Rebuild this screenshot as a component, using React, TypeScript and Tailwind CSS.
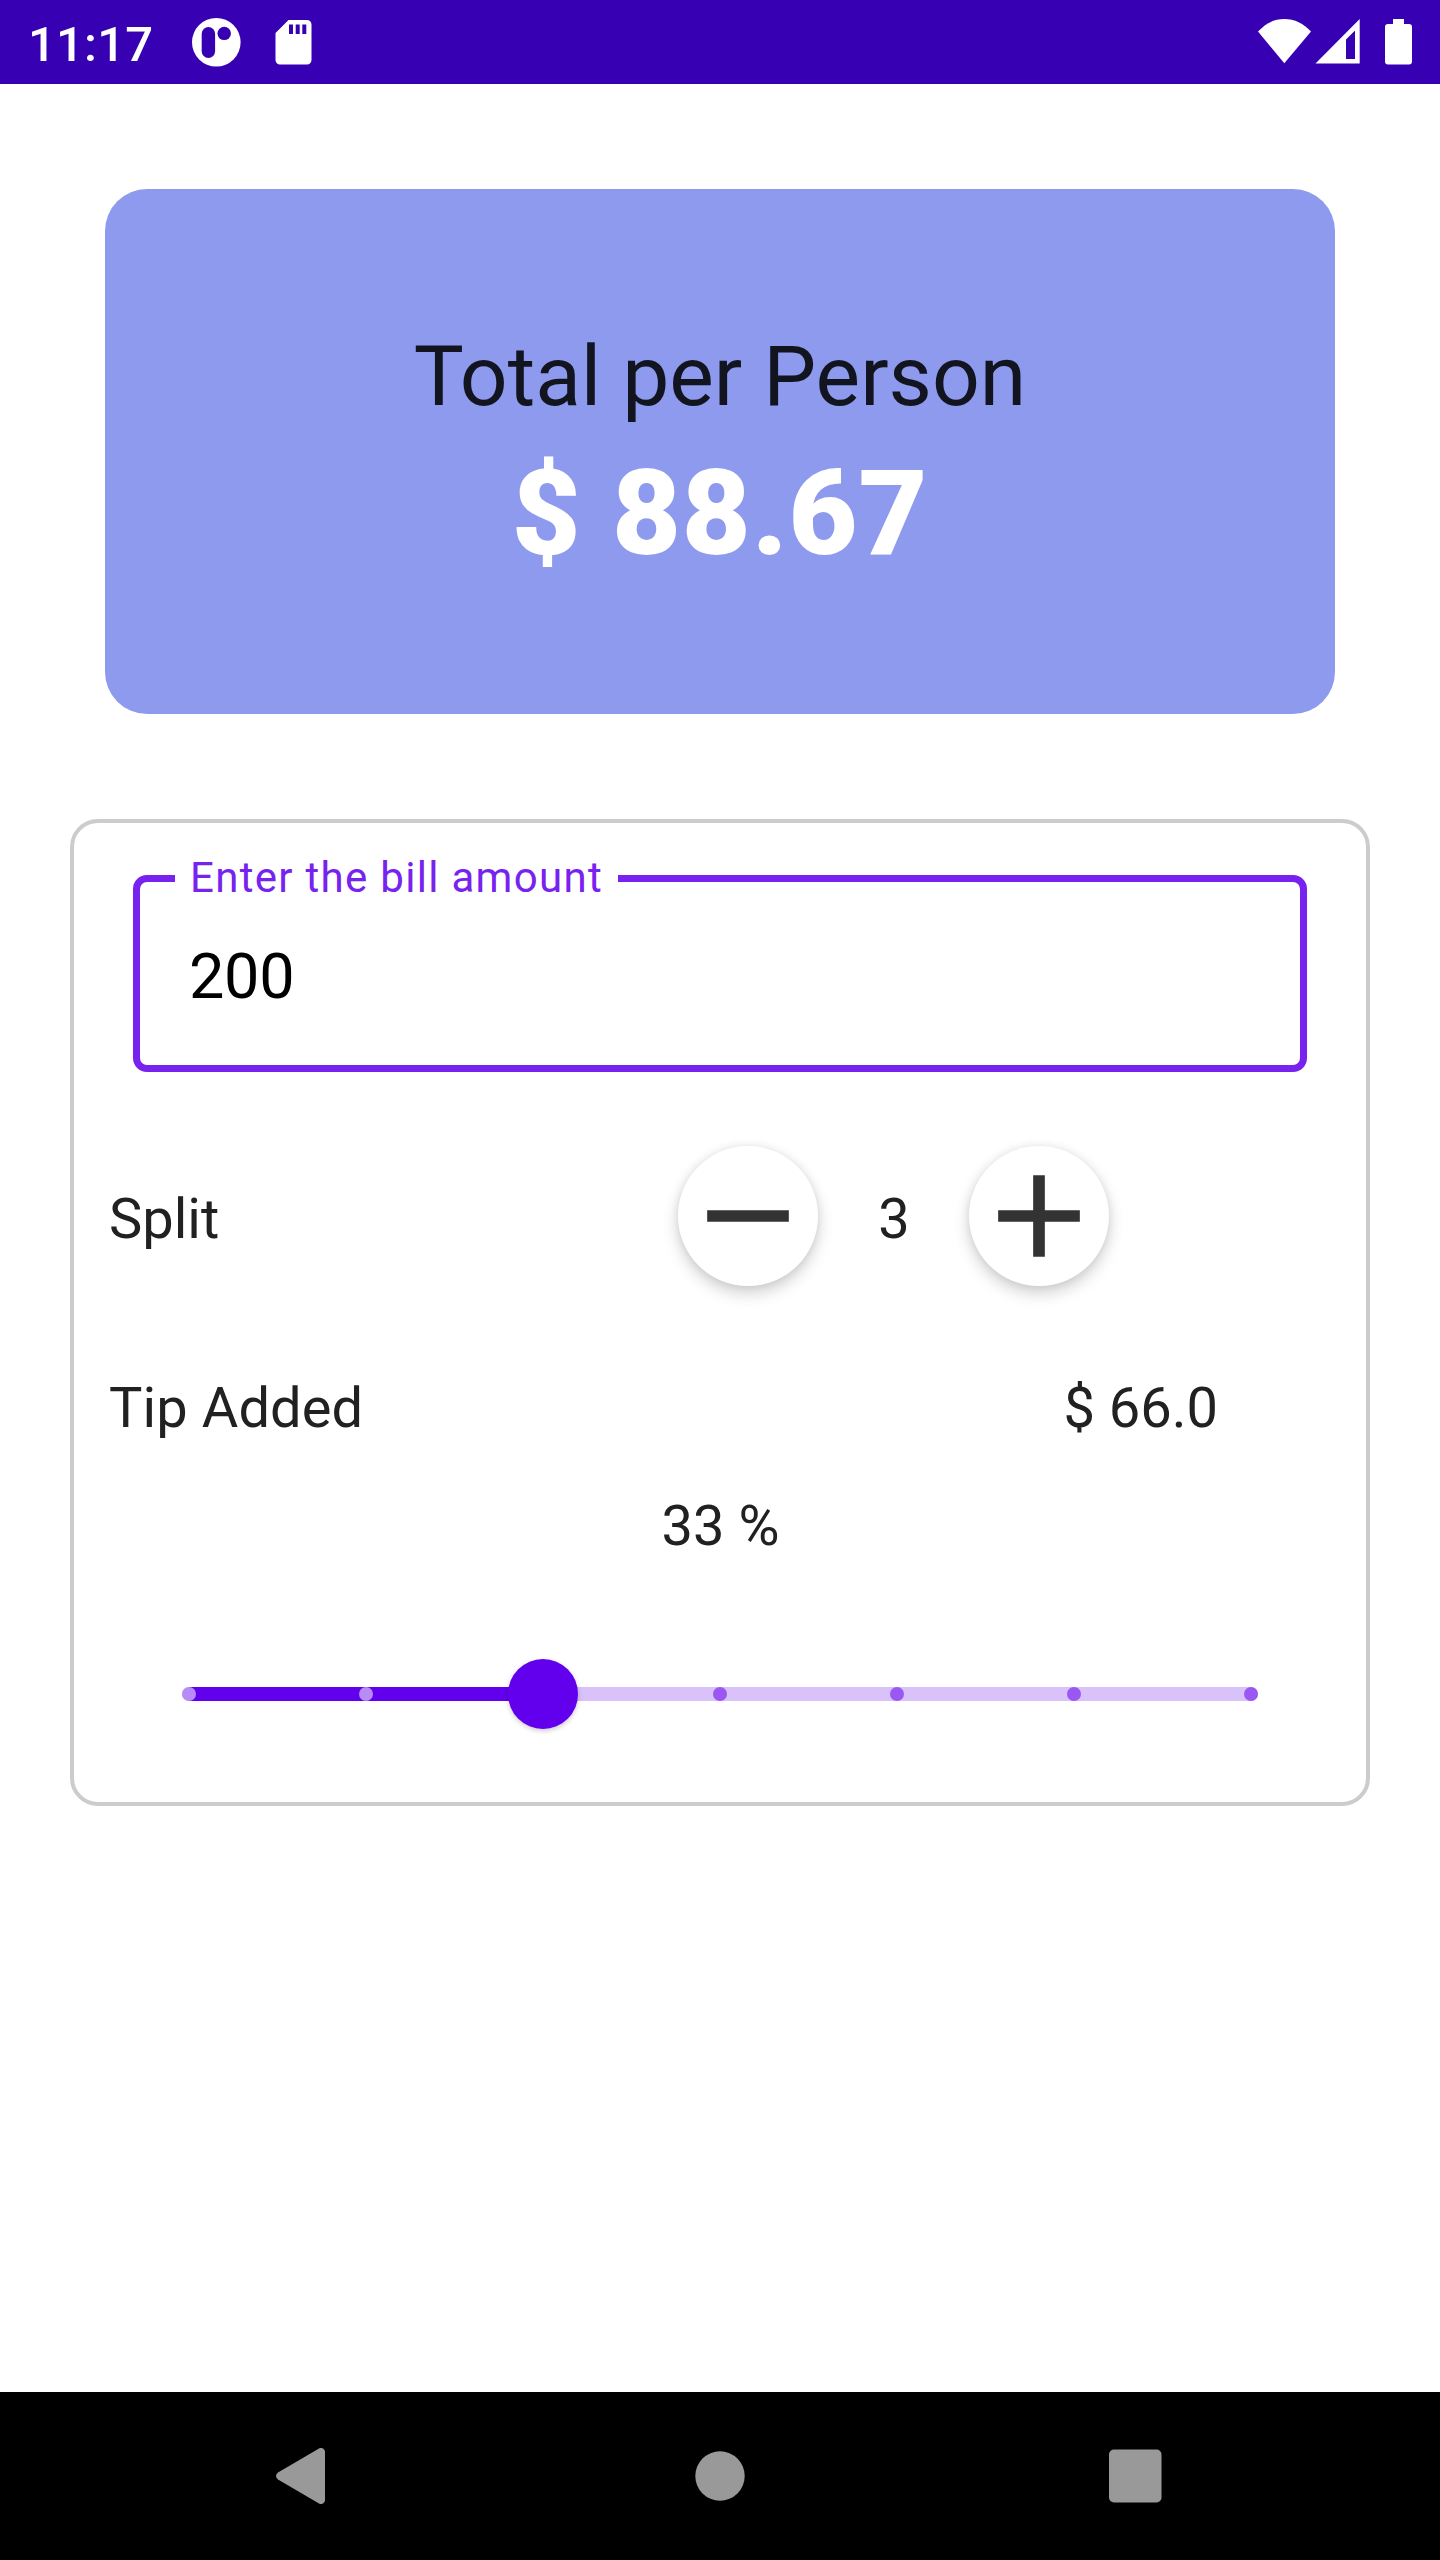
import React from "react";

function StatusBar() {
  return (
    <header className="flex h-[84px] items-start bg-[#3700b3] text-white">
      <span className="ml-[28px] mt-[16px] w-[130px] text-[49px] leading-[58px] font-medium tracking-[0.2px]">11:17</span>
      <svg className="ml-[34px] mt-[18px] h-[49px] w-[49px]" viewBox="0 0 49 49">
        <circle cx="24.3" cy="24.3" r="24.3" fill="#fff" />
        <rect x="9.7" y="9" width="13.4" height="31" rx="6.7" fill="#3700b3" />
        <circle cx="32.2" cy="15.4" r="6.7" fill="#3700b3" />
      </svg>
      <svg className="ml-[34px] mt-[20px] h-[45px] w-[37px]" viewBox="0 0 37 45">
        <path d="M13.5 0H32a4.5 4.5 0 0 1 4.500 4.500V40a4.500 4.500 0 0 1-4.500 4.500H5A4.500 4.500 0 0 1 .500 40V13z" fill="#fff" />
        <path d="M14 4.500h4V14h-4zM20.700 4.500h4V14h-4zM27.300 4.500h4V14h-4z" fill="#3700b3" />
      </svg>
      <svg className="ml-auto mr-[28px] mt-[19px] h-[46px] w-[154px]" viewBox="0 0 154 46">
        <path d="M0 12.500C7.500 4.500 16 0 26.300 0S45.500 4.500 53 12.500L26.300 44.300z" fill="#fff" />
        <path fillRule="evenodd" d="M57.500 44.500L101.700 0v44.500zM88 20.500V40h9V11.500z" fill="#fff" />
        <path d="M135 0h11v5h5a3 3 0 0 1 3 3v34.500a3 3 0 0 1-3 3h-21a3 3 0 0 1-3-3V8a3 3 0 0 1 3-3h5z" fill="#fff" />
      </svg>
    </header>
  );
}

function TotalCard() {
  return (
    <section className="mx-[105px] mt-[105px] flex h-[525px] flex-col items-center justify-center gap-[18px] rounded-[42px] bg-[#8d9aed] pt-[8px]">
      <h1 className="text-[84px] leading-[98px] text-[#12141f]">Total per Person</h1>
      <p className="text-[119px] leading-[140px] font-black tracking-[0.875px] text-white">$ 88.67</p>
    </section>
  );
}

function RoundButton({ label, d }: { label: string; d: string }) {
  return (
    <button
      aria-label={label}
      className="size-[140px] rounded-full bg-white shadow-[0_7px_16px_rgba(0,0,0,0.19),0_0_8px_rgba(0,0,0,0.07)]"
    >
      <svg viewBox="0 0 24 24" className="size-[140px]" fill="#333">
        <path d={d} />
      </svg>
    </button>
  );
}

function TipSlider() {
  const ticks = [0, 1, 2, 3, 4, 5, 6];
  return (
    <svg className="ml-[104px] mt-[85px] block h-[100px] w-[1084px]" viewBox="0 0 1084 100">
      <defs>
        <filter id="thumb-shadow" x="-50%" y="-50%" width="200%" height="200%">
          <feDropShadow dx="0" dy="2" stdDeviation="2.5" floodOpacity="0.2" />
        </filter>
      </defs>
      <path d="M11 50H1073" stroke="#d9c1fa" strokeWidth="14" strokeLinecap="round" />
      <path d="M11 50H365" stroke="#6200ee" strokeWidth="14" strokeLinecap="butt" />
      {ticks.map((i) => (
        <circle key={i} cx={11 + i * 177} cy="50" r="7" fill={i < 3 ? "#b88cf7" : "#9a57f2"} />
      ))}
      <circle cx="365" cy="50" r="35" fill="#6200ee" filter="url(#thumb-shadow)" />
    </svg>
  );
}

function BillForm() {
  return (
    <section className="mx-[70px] mt-[105px] h-[987px] rounded-[28px] border-4 border-[#ccc] text-[56px] leading-[66px] text-[#212121]">
      <div className="relative mx-[59px] mt-[52px] h-[197px] rounded-[14px] border-[7px] border-[#7722ee]">
        <label className="absolute -top-[29px] left-[35px] w-[443px] bg-white pl-[15px] text-[42px] leading-[50px] tracking-[1.3px] whitespace-nowrap text-[#7722ee]">
          Enter the bill amount
        </label>
        <p className="ml-[49px] mt-[58px] text-[63px] leading-[74px] tracking-[-0.3px] text-black">200</p>
      </div>
      <div className="mt-[74px] flex h-[140px] items-center">
        <span className="ml-[35px] mt-[6px] w-[569px]">Split</span>
        <RoundButton label="Remove person" d="M19 13H5v-2h14z" />
        <span className="mt-[6px] w-[151px] pl-[1px] text-center">3</span>
        <RoundButton label="Add person" d="M19 13h-6v6h-2v-6H5v-2h6V5h2v6h6z" />
      </div>
      <div className="mt-[89px] flex justify-between">
        <span className="ml-[35px] tracking-[0.1px]">Tip Added</span>
        <span className="mr-[148px]">$ 66.0</span>
      </div>
      <p className="mt-[52px] pl-[1px] text-center">33 %</p>
      <TipSlider />
    </section>
  );
}

function NavigationBar() {
  return (
    <footer className="mt-auto h-[168px] bg-black">
      <svg className="block h-[168px] w-full" viewBox="0 0 1440 168" fill="#999">
        <path d="M319 56.500C322 55 325 57 325 60V108C325 111 322 113 319 111.500L278 87.500Q274 84 278 80.500z" />
        <circle cx="720" cy="84" r="24.700" />
        <rect x="1109" y="57.500" width="52.500" height="53" rx="5" />
      </svg>
    </footer>
  );
}

export default function App() {
  return (
    <main className="flex h-[2560px] w-[1440px] flex-col overflow-hidden bg-white font-[Roboto,sans-serif]">
      <StatusBar />
      <TotalCard />
      <BillForm />
      <NavigationBar />
    </main>
  );
}
